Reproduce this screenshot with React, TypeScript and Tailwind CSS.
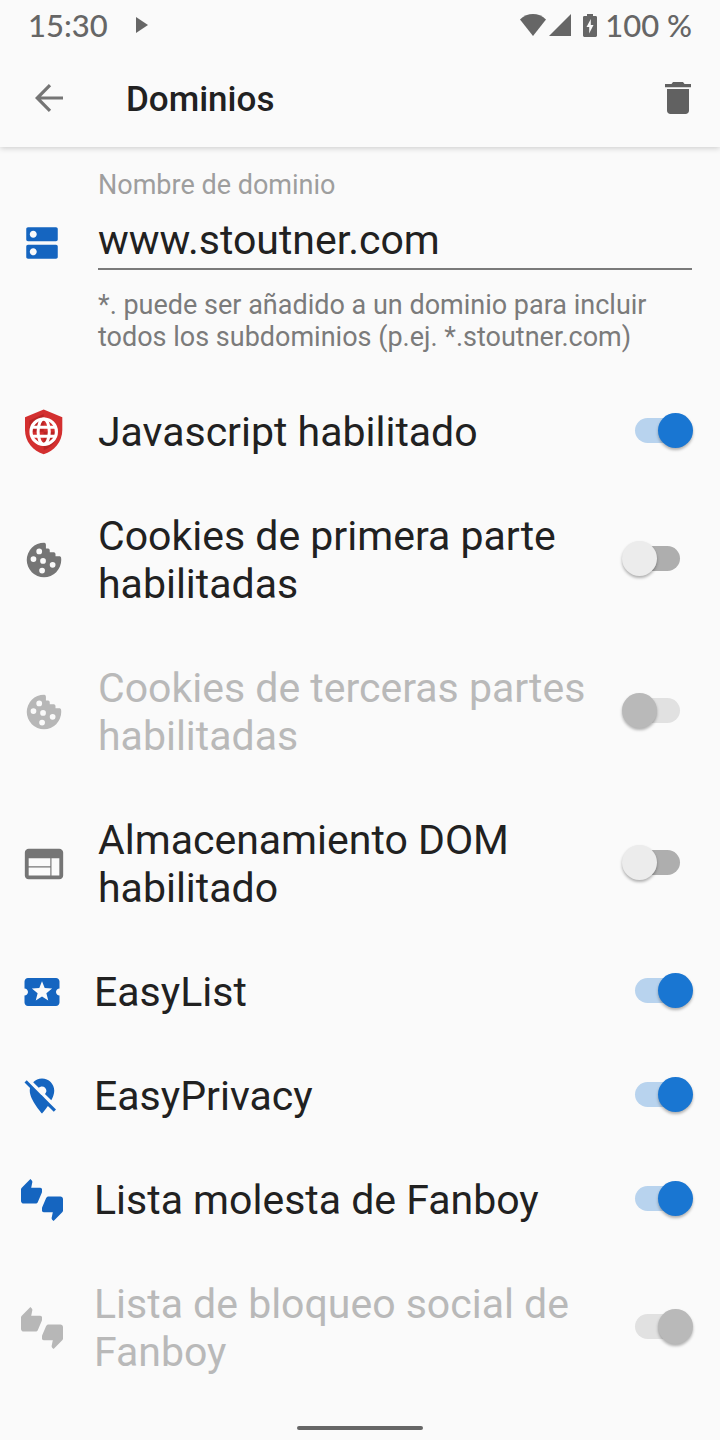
import { useState } from "react";
import type { ReactNode } from "react";

const PATHS = {
  dns: "M20 13H4c-.55 0-1 .45-1 1v6c0 .55.45 1 1 1h16c.55 0 1-.45 1-1v-6c0-.55-.45-1-1-1zM7 19c-1.1 0-2-.9-2-2s.9-2 2-2 2 .9 2 2-.9 2-2 2zM20 3H4c-.55 0-1 .45-1 1v6c0 .55.45 1 1 1h16c.55 0 1-.45 1-1V4c0-.55-.45-1-1-1zM7 9c-1.1 0-2-.9-2-2s.9-2 2-2 2 .9 2 2-.9 2-2 2z",
  cookie:
    "M12,3A9,9 0 0,0 3,12A9,9 0 0,0 12,21A9,9 0 0,0 21,12C21,11.5 20.96,11 20.87,10.5C20.6,10 20,10 20,10H18V9C18,8 17,8 17,8H15V7C15,6 14,6 14,6H13V4C13,3 12,3 12,3M9.5,6A1.5,1.5 0 0,1 11,7.5A1.5,1.5 0 0,1 9.5,9A1.5,1.5 0 0,1 8,7.5A1.5,1.5 0 0,1 9.5,6M6.5,10A1.5,1.5 0 0,1 8,11.5A1.5,1.5 0 0,1 6.5,13A1.5,1.5 0 0,1 5,11.5A1.5,1.5 0 0,1 6.5,10M11.5,11A1.5,1.5 0 0,1 13,12.5A1.5,1.5 0 0,1 11.5,14A1.5,1.5 0 0,1 10,12.5A1.5,1.5 0 0,1 11.5,11M16.5,13A1.5,1.5 0 0,1 18,14.5A1.5,1.5 0 0,1 16.5,16H16.5A1.5,1.5 0 0,1 15,14.5H15A1.5,1.5 0 0,1 16.5,13M11,16A1.5,1.5 0 0,1 12.5,17.5A1.5,1.5 0 0,1 11,19A1.5,1.5 0 0,1 9.5,17.5A1.5,1.5 0 0,1 11,16Z",
  web: "M20 4H4c-1.1 0-1.99.9-1.99 2L2 18c0 1.1.9 2 2 2h16c1.1 0 2-.9 2-2V6c0-1.1-.9-2-2-2zM15.3 18H4v-4.2h11.3zM15.3 13.2H4V9h11.3zM20 18h-4.1V9H20z",
  ticket:
    "M20 12c0-1.1.9-2 2-2V6c0-1.1-.9-2-2-2H4c-1.1 0-1.99.9-1.99 2v4c1.1 0 1.99.9 1.99 2s-.89 2-2 2v4c0 1.1.9 2 2 2h16c1.1 0 2-.9 2-2v-4c-1.1 0-2-.9-2-2zm-4.42 4.8L12 14.5l-3.58 2.3 1.08-4.12-3.29-2.69 4.24-.25L12 5.8l1.54 3.95 4.24.25-3.29 2.69 1.09 4.11z",
  locationOff:
    "M12 6.5c1.38 0 2.5 1.12 2.5 2.5 0 .74-.33 1.39-.83 1.85l3.63 3.63c.98-1.86 1.7-3.8 1.7-5.48 0-3.87-3.13-7-7-7-1.98 0-3.76.83-5.04 2.15l3.19 3.19c.46-.52 1.11-.84 1.85-.84zm4.37 9.6l-4.63-4.63-.11-.11L3.27 3 2 4.27l3.18 3.18C5.07 7.95 5 8.47 5 9c0 5.25 7 13 7 13s1.67-1.85 3.38-4.35L18.73 21 20 19.73l-3.63-3.63z",
  thumbs:
    "M12 6c0-.55-.45-1-1-1H5.82l.66-3.18.02-.23c0-.31-.13-.59-.33-.8L5.38 0 .44 4.94C.17 5.21 0 5.59 0 6v6.5c0 .83.67 1.5 1.5 1.5h6.75c.62 0 1.15-.38 1.38-.91l2.26-5.29c.07-.17.11-.36.11-.55V6zm10.5 4h-6.75c-.62 0-1.15.38-1.38.91l-2.26 5.29c-.07.17-.11.36-.11.55V18c0 .55.45 1 1 1h5.18l-.66 3.18-.02.24c0 .31.13.59.33.8l.79.78 4.94-4.94c.27-.27.44-.65.44-1.06v-6.5c0-.83-.67-1.5-1.5-1.5z",
};

type IconName = keyof typeof PATHS;

function Icon({ name, className }: { name: IconName; className: string }) {
  return (
    <svg viewBox="0 0 24 24" fill="currentColor" aria-hidden="true" className={`shrink-0 ${className}`}>
      <path d={PATHS[name]} />
    </svg>
  );
}

function ShieldIcon() {
  return (
    <svg viewBox="0 0 46 46" aria-hidden="true" className="size-[46px] shrink-0">
      <path d="M22.7.4 41.3 8.2V21c0 11.500-8 21.300-18.600 24.300C12 42.300 4 32.500 4 21V8.200z" fill="#d32f2f" />
      <path d="M22.700 5V22.700H8.500V11.500zM22.700 22.700H37C36 31.500 31 38.500 22.700 41z" fill="#bb2424" />
      <g fill="none" stroke="#fff">
        <circle cx="22.700" cy="22.700" r="12.700" strokeWidth="3.200" />
        <ellipse cx="22.700" cy="22.700" rx="5.600" ry="12.700" strokeWidth="3" />
        <path d="M11 18.200h23.400M11 27.200h23.400" strokeWidth="3" />
      </g>
    </svg>
  );
}

interface Setting {
  id: string;
  label: string;
  icon: ReactNode;
  on: boolean;
  disabled?: boolean;
}

const SETTINGS: Setting[] = [
  { id: "javascript", label: "Javascript habilitado", icon: <ShieldIcon />, on: true },
  {
    id: "first-party-cookies",
    label: "Cookies de primera parte habilitadas",
    icon: <Icon name="cookie" className="size-[46px] text-[#757575]" />,
    on: false,
  },
  {
    id: "third-party-cookies",
    label: "Cookies de terceras partes habilitadas",
    icon: <Icon name="cookie" className="size-[46px] text-[#b7b7b7]" />,
    on: false,
    disabled: true,
  },
  {
    id: "dom-storage",
    label: "Almacenamiento DOM habilitado",
    icon: <Icon name="web" className="size-[46px] text-[#757575]" />,
    on: false,
  },
  { id: "easylist", label: "EasyList", icon: <Icon name="ticket" className="size-[42px] text-[#1565c0]" />, on: true },
  {
    id: "easyprivacy",
    label: "EasyPrivacy",
    icon: <Icon name="locationOff" className="size-[42px] text-[#1565c0]" />,
    on: true,
  },
  {
    id: "fanboy-annoyance",
    label: "Lista molesta de Fanboy",
    icon: <Icon name="thumbs" className="size-[42px] text-[#1565c0]" />,
    on: true,
  },
  {
    id: "fanboy-social",
    label: "Lista de bloqueo social de Fanboy",
    icon: <Icon name="thumbs" className="size-[42px] text-[#b7b7b7]" />,
    on: true,
    disabled: true,
  },
];

function Switch({ id, initial, disabled }: { id: string; initial: boolean; disabled?: boolean }) {
  const [on, setOn] = useState(initial);
  const tone = disabled
    ? "before:bg-[#e1e1e1] after:bg-[#b9b9b9]"
    : "before:bg-[#aeaeae] after:bg-[#ececec] checked:before:bg-[#b8d3ee] checked:after:bg-[#1976d2]";
  return (
    <input
      id={id}
      type="checkbox"
      role="switch"
      checked={on}
      disabled={disabled}
      onChange={(e) => setOn(e.target.checked)}
      className={`relative flex h-[39px] w-[71px] shrink-0 appearance-none items-start justify-center pt-[5px] before:h-[25px] before:w-[45px] before:rounded-full before:content-[''] after:absolute after:left-0 after:top-0 after:size-[35px] after:rounded-full after:shadow-[0_2px_3px_rgba(0,0,0,0.3)] after:content-[''] checked:after:left-auto checked:after:right-0 ${tone}`}
    />
  );
}

function SettingRow({ setting }: { setting: Setting }) {
  return (
    <div className="flex items-center py-7">
      {setting.icon}
      <label
        htmlFor={setting.id}
        className={`ml-[31px] flex-1 pr-4 text-[41px] leading-[48px] ${setting.disabled ? "text-[#b9b9b9]" : "text-[#212121]"}`}
      >
        {setting.label}
      </label>
      <Switch id={setting.id} initial={setting.on} disabled={setting.disabled} />
    </div>
  );
}

function StatusBar() {
  return (
    <div className="flex h-[50px] items-center px-7 font-['Lato','Roboto',sans-serif] text-[31px] font-medium leading-9 text-[#666666]">
      <span>15:30</span>
      <svg viewBox="0 0 12 16" fill="currentColor" aria-hidden="true" className="ml-7 h-4 w-3">
        <path d="M0 0 12 8 0 16z" />
      </svg>
      <div className="ml-auto flex items-center">
        <svg viewBox="0 0 26 22" fill="currentColor" aria-hidden="true" className="h-[22px] w-[26px]">
          <path d="M0 5.500C7.500-1.700 18.500-1.700 26 5.500L13 22z" />
        </svg>
        <svg viewBox="0 0 22 22" fill="currentColor" aria-hidden="true" className="ml-[3px] size-[22px]">
          <path d="M22 0V22H0z" />
        </svg>
        <svg viewBox="0 0 14 23" fill="currentColor" aria-hidden="true" className="ml-3 h-[23px] w-[14px]">
          <path
            fillRule="evenodd"
            d="M4 0h6v2h2.700c.7 0 1.300.6 1.300 1.300v18.200c0 .8-.6 1.400-1.300 1.400H1.300C.6 22.900 0 22.300 0 21.500V3.300C0 2.600.6 2 1.300 2H4zM7.800 5 3.500 13h2.700v6.500l4.300-8.500H7.800z"
          />
        </svg>
        <span className="ml-2">100 %</span>
      </div>
    </div>
  );
}

export default function App() {
  const [domain, setDomain] = useState("www.stoutner.com");
  return (
    <div className="flex min-h-screen flex-col bg-[#fafafa] font-['Roboto',sans-serif]">
      <header className="bg-[#fafafa] pb-px shadow-[0_1px_6px_rgba(0,0,0,0.2)]">
        <StatusBar />
        <div className="flex h-24 items-center pl-[35px] pr-[29px]">
          <button type="button" aria-label="Atrás" className="text-[#757575]">
            <svg viewBox="0 0 28 28" fill="none" stroke="currentColor" strokeWidth="3.200" aria-hidden="true" className="size-7">
              <path d="M28 14H2.500M15 1.200 2.200 14 15 26.800" />
            </svg>
          </button>
          <h1 className="ml-[63px] flex-1 pt-1 text-[35px] font-medium leading-10 text-[#212121]">Dominios</h1>
          <button type="button" aria-label="Eliminar" className="text-[#616161]">
            <svg viewBox="0 0 26 32" fill="currentColor" aria-hidden="true" className="h-8 w-[26px]">
              <path d="M2 7h22v21.500c0 2-1.500 3.500-3.500 3.500h-15C3.500 32 2 30.500 2 28.500zM8 0h10l1.500 2H26v3.300H0V2h6.500z" />
            </svg>
          </button>
        </div>
      </header>

      <main className="flex-1 pl-[21px]">
        <section className="flex pr-7 pt-[22px]">
          <Icon name="dns" className="mt-[53px] size-[42px] text-[#1565c0]" />
          <div className="ml-[35px] flex-1">
            <label htmlFor="domain" className="block text-[27px] leading-8 text-[#9e9e9e]">
              Nombre de dominio
            </label>
            <input
              id="domain"
              type="text"
              value={domain}
              onChange={(e) => setDomain(e.target.value)}
              className="mt-4 block h-[53px] w-full border-b-2 border-[#7a7a7a] bg-transparent pb-[6px] text-[41px] leading-[48px] text-[#212121] outline-none"
            />
            <p className="mt-[19px] text-[27px] leading-8 text-[#7b7b7b]">
              *. puede ser añadido a un dominio para incluir todos los subdominios (p.ej. *.stoutner.com)
            </p>
          </div>
        </section>
        <section className="pr-[27px] pt-[27px]">
          {SETTINGS.map((s) => (
            <SettingRow key={s.id} setting={s} />
          ))}
        </section>
      </main>

      <footer className="flex justify-center pb-[10px] pt-5">
        <div className="h-1 w-[126px] rounded-full bg-[#666666]" />
      </footer>
    </div>
  );
}
